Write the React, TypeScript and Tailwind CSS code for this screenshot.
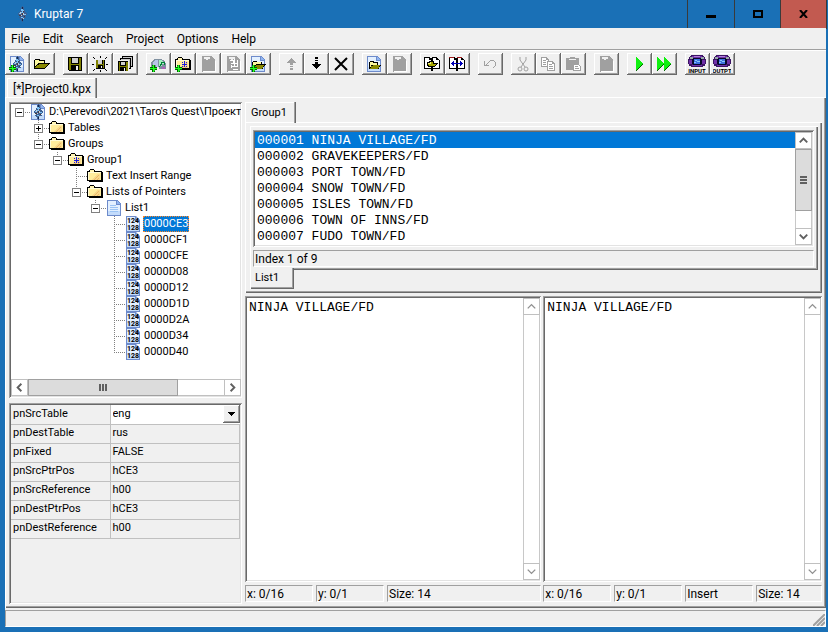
import React from 'react';

const raised = 'shadow-[inset_-1px_-1px_#696969,inset_1px_1px_#fff,inset_-2px_-2px_#a0a0a0]';
const sunken = 'shadow-[inset_1px_1px_#a0a0a0,inset_-1px_-1px_#fff,inset_2px_2px_#696969,inset_-2px_-2px_#e3e3e3]';

function Svg({ children, w = 16, h = 16 }: { children?: React.ReactNode; w?: number; h?: number }) {
  return (
    <svg width={w} height={h} viewBox={`0 0 ${w} ${h}`} shapeRendering="crispEdges" className="block shrink-0" aria-hidden="true">
      {children}
    </svg>
  );
}

/* ---------- icon parts ---------- */

function Page() {
  return (
    <>
      <path d="M1 0h10l4 4v12H1z" fill="#6d8bcb" />
      <path d="M2 1h8v4h4v10H2z" fill="#e3f0ff" />
      <path d="M2 11h12v4H2z" fill="#c4dcfb" />
      <path d="M11 1l3 3h-3z" fill="#8fb4f0" />
    </>
  );
}

function Figure() {
  return (
    <>
      <path d="M8 0h1v1h1v3h1v2h1v1h1v2h-1v1h-1v1h1v1h-2v1h-1v2H9v1H8v-1H7v-2H6v-1H5v-1h1v-1H5V9H4V7h1V6h1V4h1V1h1z" fill="#3c5f92" />
      <path d="M7 3h2v1h1v2H9v1H7V6h1V5H7zM5 7h1v1H5zM10 8h2v1h-2zM7 11h2v1H7z" fill="#7cc0f4" />
      <path d="M6 6h1v2H6zM9 7h1v2H9zM7 9h1v1H7zM9 12h1v1H9z" fill="#c4ccd4" />
      <path d="M8 7h1v2H8zM5 9h2v1H5zM9 5h1v1H9zM10 10h1v1h-1z" fill="#4a3c40" />
      <path d="M8 13h1v2H8zM8 1h1v2H8z" fill="#14284e" />
    </>
  );
}

function Plus() {
  return (
    <>
      <path d="M2 9h3v2h2v3H5v2H2v-2H0v-3h2z" fill="#006400" />
      <path d="M3 9h1v3h3v1H4v3H3v-3H0v-1h3z" fill="#20ff20" />
      <path d="M2 10h1v1H2zM4 13h1v2H4z" fill="#20d820" />
    </>
  );
}

function FolderBody() {
  return (
    <>
      <path d="M2 2h1V1h4v1h1v1h7v1h1v10H2v-1H0V3h2z" fill="#000" />
      <path d="M1 4h13v8H1z" fill="#ffec9c" />
      <path d="M3 2h4v2H3z" fill="#fff3b0" />
      <path d="M1 4h13v1H1zM1 4h1v8H1z" fill="#fffbd8" />
      <path d="M5 12v-1h1v-1h1V9h1V8h1V7h1V6h3v6z" fill="#f8d88c" />
      <path d="M7 11h1v1H7zM8 10h1v1H8zM9 9h1v1H9zM10 8h1v1h-1zM11 7h1v1h-1zM10 11h1v1h-1zM11 10h1v1h-1z" fill="#ecb868" />
    </>
  );
}

function OpenFolder() {
  return (
    <>
      <path d="M0 4h1V3h5v1h5v3h5v1h-1v1h-1v1h-1v1h-1v1h-1v1H0z" fill="#000" />
      <path d="M1 4h4v1h5v2H4v1H3v1H2v1H1z" fill="#fcf8a0" />
      <path d="M5 8h9v1h-1v1h-1v1h-1v1H1v-1h1v-1h1V9h2z" fill="#888800" />
    </>
  );
}

function Floppy() {
  return (
    <>
      <path d="M1 1h14v14H2v-1H1z" fill="#000" />
      <path d="M2 2h2v6h8V2h2v12H2z" fill="#808000" />
      <path d="M5 2h6v5H5z" fill="#d0d0d0" />
      <path d="M4 9h8v5H4z" fill="#000" />
      <path d="M9 10h2v4H9z" fill="#f0f0f0" />
    </>
  );
}

function GreyDoc() {
  return (
    <>
      <path d="M2 0h9l4 4v12H2z" fill="#a0a0a0" />
      <path d="M4 1h6v2H8v1H6V3H4z" fill="#f0f0f0" />
      <path d="M15 5h1v11H3v-1h12z" fill="#fff" />
    </>
  );
}

function Sheets() {
  return (
    <g fill="#fff" stroke="#a0a0a0">
      <path d="M1.500 1.500h5l2 2v7h-7zM6.500 1.500v2h2" />
      <path d="M7.500 5.500h5l2 2v7h-7zM12.500 5.500v2h2" />
      <path d="M3 4.500h3M3 6.500h3M3 8.500h3M9 8.500h3M9 10.500h4M9 12.500h4" />
    </g>
  );
}

function Handheld({ label }: { label: string }) {
  return (
    <svg width="18" height="18" viewBox="0 0 18 18" className="block" aria-hidden="true">
      <g shapeRendering="crispEdges">
        <path d="M3 0h12v1h1v1h1v2h1v5h-1v2h-2v1H3v-1H1V9H0V4h1V2h1V1h1z" fill="#3c1464" />
        <path d="M4 1h10v2H4zM1 5h3v4H1zM14 5h3v4h-3zM4 10h10v1H4z" fill="#7030a8" />
        <path d="M2 2h3v2H2zM13 2h3v2h-3z" fill="#98a8a8" />
        <path d="M6 1h6v1H6z" fill="#b080d8" />
        <path d="M5 3h8v1h1v5h-1v1H5V9H4V4h1z" fill="#08082c" />
        <path d="M6 4h6v5H6z" fill="#3c70e0" />
        <path d="M7 5h2v1H7zM9 6h3v1H9zM6 7h2v1H6z" fill="#88c8f8" />
      </g>
      <text x="9" y="18" textAnchor="middle" fontSize="6" fontWeight="700" fontFamily="Roboto, sans-serif">
        {label}
      </text>
    </svg>
  );
}

const icons: Record<string, React.ReactNode> = {
  newProject: <Svg><Page /><Figure /><Plus /></Svg>,
  open: <Svg><OpenFolder /></Svg>,
  save: <Svg><Floppy /></Svg>,
  saveAs: (
    <Svg>
      <g transform="translate(3 3) scale(.65)"><Floppy /></g>
      <path d="M8 0v2M8 14v2M0 8h2M14 8h2M1 1l2 2M13 3l2-2M1 15l2-2M13 13l2 2" stroke="#000" />
    </Svg>
  ),
  saveAll: (
    <Svg>
      <path d="M5 0h11v11h-2v2h-2V4H3V2h2z" fill="#000" />
      <path d="M6 1h9v1H6zM4 3h9v1H4zM14 2h1v8h-1zM12 4h1v8h-1z" fill="#c8c8c8" />
      <g transform="translate(0 4) scale(.75)"><Floppy /></g>
    </Svg>
  ),
  addTable: (
    <Svg>
      <path d="M1 11V6h1V5h1V4h1V3h8v1h2v1h1v2h1v6H9v-2z" fill="#8090a0" />
      <path d="M3 9V6h1V5h1V4h3v7H6V9z" fill="#b8c4e8" />
      <path d="M9 4h3v1h1v1h1v2h-2v2H9z" fill="#a4f0c0" />
      <path d="M9 11l4-5M11 6h3v3" stroke="#008038" fill="none" />
      <path d="M12 11h3v2h-3z" fill="#b060b8" />
      <Plus />
    </Svg>
  ),
  addGroup: (
    <Svg>
      <FolderBody />
      <path d="M9 5h1v6H9zM7 8h5v1H7zM7 6h1v1H7zM11 6h1v1h-1zM7 10h1v1H7zM11 10h1v1h-1z" fill="#1818e0" />
      <Plus />
    </Svg>
  ),
  greyDoc: <Svg><GreyDoc /></Svg>,
  greyNumbers: (
    <Svg>
      <GreyDoc />
      <path d="M5 4h3v3M9 3v8M12 4v6M6 7h7M7 10h6M8 13h5M6 9v3" stroke="#fff" fill="none" />
    </Svg>
  ),
  addList: (
    <Svg>
      <Page />
      <g transform="translate(2 2) scale(.875)"><OpenFolder /></g>
      <Plus />
    </Svg>
  ),
  up: (
    <Svg>
      <path d="M8 2h1v1h1v1h1v1h1v1h1v1h-3v2H7V7H4V6h1V5h1V4h1V3h1zM7 10h3v1H7zM7 12h3v2H7z" fill="#a0a0a0" />
    </Svg>
  ),
  down: (
    <Svg>
      <path d="M7 1h3v2H7zM7 4h3v1H7zM7 6h3v2h3v1h-1v1h-1v1h-1v1H9v1H8v-1H7v-1H6v-1H5V9H4V8h3z" fill="#000" />
    </Svg>
  ),
  remove: (
    <svg width="16" height="16" viewBox="0 0 16 16" aria-hidden="true">
      <path d="M2 2l12 12M2 14L14 2" stroke="#000" strokeWidth="2" />
    </svg>
  ),
  openPage: <Svg><Page /><g transform="translate(3 3) scale(.8)"><OpenFolder /></g></Svg>,
  pagesFolder: (
    <Svg>
      <path d="M0 1h6v1h2V1h5v1h1v1h1v1h1v9H9v2H7v-2H0z" fill="#000" />
      <path d="M1 2h4v2h2v8H1zM9 2h3v2h3v8H9z" fill="#fff" />
      <path d="M3 6h2V5h5v2h4v1h-1v1h-1v1h-1v1H4v-1H3z" fill="#000" />
      <path d="M4 7h2V6h3v2h3v1h-1v1H5V9H4z" fill="#a8a800" />
      <path d="M4 7h2V6h1v2H4z" fill="#f0f080" />
    </Svg>
  ),
  pagesArrow: (
    <Svg>
      <path d="M0 1h6v1h2V1h5v1h1v1h1v1h1v9H9v2H7v-2H0z" fill="#000" />
      <path d="M1 2h4v2h2v8H1zM9 2h3v2h3v8H9z" fill="#fff" />
      <path d="M0 1h5v1H0zM8 1h5v1H8z" fill="#a01818" />
      <path d="M2 7h1V6h1V5h1v2h6V5h1v1h1v1h1v1h-1v1h-1v1h-1V8H5v2H4V9H3V8H2z" fill="#0000b8" />
    </Svg>
  ),
  undo: (
    <Svg>
      <path d="M2 5h1v4h1V8h1V7h1v1H5v1h2v1H2zM6 6h1V5h1V4h4v1h1v1h1v4h-1v1h-1v1h-1v-1h1v-1h1V6h-1V5H8v1H7v1H6z" fill="#a0a0a0" />
    </Svg>
  ),
  cut: (
    <svg width="16" height="16" viewBox="0 0 16 16" fill="none" stroke="#a0a0a0" aria-hidden="true">
      <path d="M5 1v3l5 7M11 1v3L6 11" />
      <circle cx="5" cy="13" r="2" />
      <circle cx="11" cy="13" r="2" />
    </svg>
  ),
  copy: <Svg><Sheets /></Svg>,
  paste: (
    <Svg>
      <path d="M1 2h4V1h5v1h4v6H8v6H1z" fill="#a0a0a0" />
      <path d="M4 3h7v1H4z" fill="#f0f0f0" />
      <path d="M8.500 8.500h5l2 2v4h-7zM10 10.500h3M10 12.500h4" fill="#fff" stroke="#a0a0a0" />
    </Svg>
  ),
  run: (
    <Svg>
      <path d="M5 1l7 7-7 7z" fill="#10f010" />
      <path d="M12 8l-7 7" stroke="#006000" />
    </Svg>
  ),
  runAll: (
    <Svg>
      <path d="M1 1l7 7-7 7zM8 1l7 7-7 7z" fill="#10f010" />
      <path d="M8 8l-7 7M15 8l-7 7" stroke="#006000" />
    </Svg>
  ),
  input: <Handheld label="INPUT" />,
  output: <Handheld label="OUTPT" />,
  project: <Svg><Page /><Figure /></Svg>,
  folder: <Svg><FolderBody /></Svg>,
  group: (
    <Svg>
      <FolderBody />
      <path d="M8 5h1v6H8zM6 8h5v1H6zM6 6h1v1H6zM10 6h1v1h-1zM6 10h1v1H6zM10 10h1v1h-1z" fill="#1818e0" />
    </Svg>
  ),
  list: (
    <Svg>
      <Page />
      <path d="M4 5h6v1H4zM4 7h8v1H4zM4 9h8v1H4zM4 11h8v1H4z" fill="#9cc4f4" />
    </Svg>
  ),
  pointer: (
    <svg width="16" height="16" viewBox="0 0 16 16" className="block shrink-0" aria-hidden="true">
      <Page />
      <g fontSize="7" fontWeight="700" fontFamily="Roboto, sans-serif" textAnchor="middle">
        <text x="8" y="7">124</text>
        <text x="8" y="14">128</text>
      </g>
    </svg>
  ),
};

/* ---------- toolbar ---------- */

const toolbar = [
  [['newProject', 'New project'], ['open', 'Open project']],
  [['save', 'Save'], ['saveAs', 'Save as'], ['saveAll', 'Save all']],
  [['addTable', 'Add table'], ['addGroup', 'Add group'], ['greyDoc', 'Add list'], ['greyNumbers', 'Add pointers'], ['addList', 'Load list']],
  [['up', 'Move up'], ['down', 'Move down'], ['remove', 'Delete']],
  [['openPage', 'Load text'], ['greyDoc', 'Save text']],
  [['pagesFolder', 'Reload originals'], ['pagesArrow', 'Reset text']],
  [['undo', 'Undo']],
  [['cut', 'Cut'], ['copy', 'Copy'], ['paste', 'Paste']],
  [['greyDoc', 'Dictionary']],
  [['run', 'Insert'], ['runAll', 'Insert all']],
  [['input', 'Run input ROM'], ['output', 'Run output ROM']],
];

function Toolbar() {
  return (
    <div className="flex gap-2 border-t border-white pt-[2px]">
      {toolbar.map((group, i) => (
        <div key={i} className="flex">
          {group.map(([icon, label]) => (
            <button key={label} aria-label={label} className={`flex h-[22px] w-[25px] items-center justify-center pr-[2px] ${raised}`}>
              {icons[icon]}
            </button>
          ))}
        </div>
      ))}
    </div>
  );
}

/* ---------- scroll bars ---------- */

const arrows = {
  up: 'M4 10l4-4 4 4',
  down: 'M4 6l4 4 4-4',
  left: 'M10 4L6 8l4 4',
  right: 'M6 4l4 4-4 4',
};

function ArrowButton({ dir, dim }: { dir: keyof typeof arrows; dim?: boolean }) {
  return (
    <button aria-label={`Scroll ${dir}`} className="flex size-[17px] shrink-0 items-center justify-center border border-[#c0c0c0] bg-white">
      <svg width="15" height="15" viewBox="0 0 16 16" fill="none" stroke={dim ? '#909090' : '#606060'} strokeWidth={dim ? 1.5 : 2} aria-hidden="true">
        <path d={arrows[dir]} />
      </svg>
    </button>
  );
}

function VerticalBar({ thumb }: { thumb?: boolean }) {
  return (
    <div className="flex w-[17px] shrink-0 flex-col bg-white">
      <ArrowButton dir="up" dim={!thumb} />
      <div className="flex flex-1 flex-col border-x border-[#c8c8c8]">
        {thumb && (
          <div className="-mx-px flex h-[62px] flex-col items-center justify-center gap-px border border-[#a0a0a0] bg-[#dcdcdc]">
            <div className="h-[2px] w-[7px] bg-[#606060]" />
            <div className="h-[2px] w-[7px] bg-[#606060]" />
            <div className="h-[2px] w-[7px] bg-[#606060]" />
          </div>
        )}
      </div>
      <ArrowButton dir="down" dim={!thumb} />
    </div>
  );
}

function HorizontalBar() {
  return (
    <div className="flex h-[17px] shrink-0 bg-white">
      <ArrowButton dir="left" />
      <div className="flex flex-1 border-y border-[#c0c0c0]">
        <div className="-my-px flex w-[150px] items-center justify-center gap-px border border-[#a0a0a0] bg-[#dcdcdc]">
          <div className="h-[7px] w-[2px] bg-[#606060]" />
          <div className="h-[7px] w-[2px] bg-[#606060]" />
          <div className="h-[7px] w-[2px] bg-[#606060]" />
        </div>
      </div>
      <ArrowButton dir="right" />
    </div>
  );
}

/* ---------- project tree ---------- */

type Item = { label: string; icon: string; open?: boolean; closed?: boolean; selected?: boolean; children?: Item[] };

const pointers = ['0000CE3', '0000CF1', '0000CFE', '0000D08', '0000D12', '0000D1D', '0000D2A', '0000D34', '0000D40'];

const project: Item = {
  label: "D:\\Perevodi\\2021\\Taro's Quest\\Проект",
  icon: 'project',
  open: true,
  children: [
    { label: 'Tables', icon: 'folder', closed: true },
    {
      label: 'Groups',
      icon: 'folder',
      open: true,
      children: [
        {
          label: 'Group1',
          icon: 'group',
          open: true,
          children: [
            { label: 'Text Insert Range', icon: 'folder' },
            {
              label: 'Lists of Pointers',
              icon: 'folder',
              open: true,
              children: [
                {
                  label: 'List1',
                  icon: 'list',
                  open: true,
                  children: pointers.map((label, i) => ({ label, icon: 'pointer', selected: i === 0 })),
                },
              ],
            },
          ],
        },
      ],
    },
  ],
};

function TreeNode({ item, root, last }: { item: Item; root?: boolean; last?: boolean }) {
  const box = item.open || item.closed;
  return (
    <li>
      <div className="flex h-4 items-center">
        <Svg w={19}>
          <path d={`${root ? '' : last ? 'M8.500 0v9' : 'M8.500 0v16'}M8 8.500h11`} stroke="#808080" strokeDasharray="1 1" fill="none" />
          {box && (
            <>
              <path d="M4.500 4.500h8v8h-8z" fill="#fff" stroke="#808080" />
              <path d={item.closed ? 'M6 8.500h5M8.500 6v5' : 'M6 8.500h5'} stroke="#000" />
            </>
          )}
        </Svg>
        {icons[item.icon]}
        <span
          className={`ml-[2px] border border-dotted leading-[14px] whitespace-nowrap ${
            item.selected ? 'border-[#ff8728] bg-[#0078d7] text-white' : 'border-transparent'
          }`}
        >
          {item.label}
        </span>
      </div>
      {item.children && (
        <ul className="pl-[19px]">
          {item.children.map((child, i) => (
            <TreeNode key={child.label} item={child} last={i === item.children!.length - 1} />
          ))}
        </ul>
      )}
    </li>
  );
}

/* ---------- properties ---------- */

const properties = [
  ['pnDestTable', 'rus'],
  ['pnFixed', 'FALSE'],
  ['pnSrcPtrPos', 'hCE3'],
  ['pnSrcReference', 'h00'],
  ['pnDestPtrPos', 'hCE3'],
  ['pnDestReference', 'h00'],
];

function Properties() {
  return (
    <div className={`h-[201px] p-[2px] ${sunken}`}>
      <table className="w-full table-fixed border-collapse">
        <tbody>
          <tr className="h-[19px]">
            <th className="w-[99px] border-r border-b border-[#c0c0c0] px-[2px] text-left font-normal">
              <label htmlFor="src-table">pnSrcTable</label>
            </th>
            <td className="border-b border-[#c0c0c0] bg-white p-0">
              <div className="flex h-[18px]">
                <select id="src-table" defaultValue="eng" className="min-w-0 flex-1 appearance-none bg-white pl-[2px] outline-none">
                  <option>eng</option>
                  <option>rus</option>
                </select>
                <span className={`flex w-[17px] items-center justify-center bg-[#f0f0f0] ${raised}`}>
                  <Svg w={7} h={4}>
                    <path d="M0 0h7v1H6v1H5v1H4v1H3V3H2V2H1V1H0z" />
                  </Svg>
                </span>
              </div>
            </td>
          </tr>
          {properties.map(([name, value]) => (
            <tr key={name} className="h-[19px]">
              <th className="border-r border-b border-[#c0c0c0] px-[2px] text-left font-normal">{name}</th>
              <td className="border-r border-b border-[#c0c0c0] px-[2px]">{value}</td>
            </tr>
          ))}
        </tbody>
      </table>
    </div>
  );
}

/* ---------- strings ---------- */

const strings = [
  '000001 NINJA VILLAGE/FD',
  '000002 GRAVEKEEPERS/FD',
  '000003 PORT TOWN/FD',
  '000004 SNOW TOWN/FD',
  '000005 ISLES TOWN/FD',
  '000006 TOWN OF INNS/FD',
  '000007 FUDO TOWN/FD',
];

function GroupPanel() {
  return (
    <div>
      <button className="relative z-10 block h-[21px] w-[49px] border-t border-l border-white pl-[5px] text-left shadow-[1px_0_#a0a0a0,2px_0_#696969]">
        Group1
      </button>
      <div className="-mt-px border-t border-l border-white pt-[3px] pr-1 pb-1 pl-1 shadow-[inset_-1px_-1px_#696969,inset_-2px_-2px_#a0a0a0]">
        <div className="border-t border-l border-white pt-[3px] pr-1 pb-[3px] pl-[2px] shadow-[inset_-1px_-1px_#696969,inset_-2px_-2px_#a0a0a0]">
          <div className={`flex bg-white p-[2px] ${sunken}`}>
            <ul className="h-[113px] min-w-0 flex-1 overflow-hidden font-['Liberation_Mono',monospace] text-[13px]">
              {strings.map((s, i) => (
                <li key={s}>
                  <button className={`block h-4 w-full pt-px pl-[2px] text-left leading-4 ${i === 0 ? 'bg-[#0078d7] text-white' : ''}`}>
                    {s}
                  </button>
                </li>
              ))}
            </ul>
            <VerticalBar thumb />
          </div>
          <div className="mt-[3px] h-[17px] border border-[#a0a0a0] border-r-white border-b-white pl-[1px] text-[12px] leading-4">
            Index 1 of 9
          </div>
        </div>
        <button className="relative -mt-[2px] block h-[21px] w-[44px] border-l border-white bg-[#f0f0f0] pl-1 text-left shadow-[inset_-1px_-1px_#696969,inset_-2px_-2px_#a0a0a0]">
          List1
        </button>
      </div>
    </div>
  );
}

function Editor({ label, status, className }: { label: string; status: string[]; className: string }) {
  return (
    <div className={`flex min-w-0 flex-col ${className}`}>
      <div className={`flex flex-1 bg-white py-[2px] pr-px pl-[2px] ${sunken}`}>
        <textarea
          aria-label={label}
          defaultValue="NINJA VILLAGE/FD"
          spellCheck={false}
          className="min-w-0 flex-1 resize-none overflow-hidden pt-[2px] pl-[2px] font-['Liberation_Mono',monospace] text-[13px] leading-4 outline-none"
        />
        <VerticalBar />
      </div>
      <div className="mt-[3px] flex gap-[3px]">
        {status.map((s, i) => (
          <div
            key={s}
            className={`h-[17px] border border-[#a0a0a0] border-r-white border-b-white pl-px text-[12px] leading-4 whitespace-nowrap ${
              i === status.length - 1 ? 'flex-1' : 'w-[68px]'
            }`}
          >
            {s}
          </div>
        ))}
      </div>
    </div>
  );
}

function TitleBar() {
  return (
    <header className="flex h-7 items-center pr-px text-white">
      <div className="ml-[14px] flex flex-1 items-center gap-1">
        <Svg><Figure /></Svg>
        <h1 className="text-[12px]">Kruptar 7</h1>
      </div>
      <button aria-label="Minimize" className="flex h-[29px] w-[47px] items-center justify-center self-start border border-t-0 border-r-0 border-[#3a3a3a]">
        <Svg w={10} h={10}><path d="M0 6h10v3H0z" /></Svg>
      </button>
      <button aria-label="Maximize" className="flex h-[29px] w-[46px] items-center justify-center self-start border border-t-0 border-r-0 border-[#3a3a3a]">
        <Svg w={10} h={8}><path d="M1 1h8v6H1z" fill="none" stroke="#000" strokeWidth="2" /></Svg>
      </button>
      <button aria-label="Close" className="flex h-[29px] w-[47px] items-center justify-center self-start border border-t-0 border-[#3a3a3a] bg-[#c25a50]">
        <svg width="9" height="8" viewBox="0 0 9 8" aria-hidden="true">
          <path d="M1 0l7 8M8 0L1 8" stroke="#000" strokeWidth="2" />
        </svg>
      </button>
    </header>
  );
}

export default function App() {
  return (
    <div className="flex min-h-screen flex-col bg-[#1a70b6] font-['Roboto',sans-serif] text-[11px] text-black">
      <TitleBar />
      <div className="mr-[2px] mb-[5px] ml-[5px] flex flex-1 flex-col bg-[#f0f0f0]">
        <nav className="flex h-[22px] items-center gap-[13px] border-b border-[#a0a0a0] pl-[6px] text-[12px]">
          {['File', 'Edit', 'Search', 'Project', 'Options', 'Help'].map((m) => (
            <button key={m}>{m}</button>
          ))}
        </nav>
        <Toolbar />
        <button className="relative z-10 mt-[3px] ml-[2px] block h-5 w-[88px] border-t border-l border-white pl-[5px] text-left text-[12px] shadow-[1px_0_#a0a0a0,2px_0_#696969]">
          [*]Project0.kpx
        </button>
        <main className="-mt-px flex flex-1 gap-[3px] border-t border-l border-white pt-1 pr-[4px] pb-1 pl-[3px] shadow-[inset_-1px_-1px_#696969,inset_-2px_-2px_#a0a0a0]">
          <aside className="flex w-[233px] shrink-0 flex-col gap-[5px]">
            <div className={`flex flex-1 flex-col bg-white py-[2px] pr-px pl-[2px] ${sunken}`}>
              <ul className="flex-1 overflow-hidden">
                <TreeNode item={project} root />
              </ul>
              <HorizontalBar />
            </div>
            <Properties />
          </aside>
          <section className="flex min-w-0 flex-1 flex-col pb-[2px]">
            <GroupPanel />
            <div className="mt-[3px] flex flex-1 gap-[2px]">
              <Editor className="flex-[17]" label="Original text" status={['x: 0/16', 'y: 0/1', 'Size: 14']} />
              <Editor className="flex-[16]" label="Translated text" status={['x: 0/16', 'y: 0/1', 'Insert', 'Size: 14']} />
            </div>
          </section>
        </main>
        <footer className="mt-[2px] flex h-[17px] items-end justify-end border border-[#a0a0a0] border-r-white border-b-white">
          <svg width="12" height="12" viewBox="0 0 12 12" stroke="#a0a0a0" aria-hidden="true">
            <path d="M0 12L12 0M4 12l8-8M8 12l4-4" strokeWidth="2" />
          </svg>
        </footer>
      </div>
    </div>
  );
}
